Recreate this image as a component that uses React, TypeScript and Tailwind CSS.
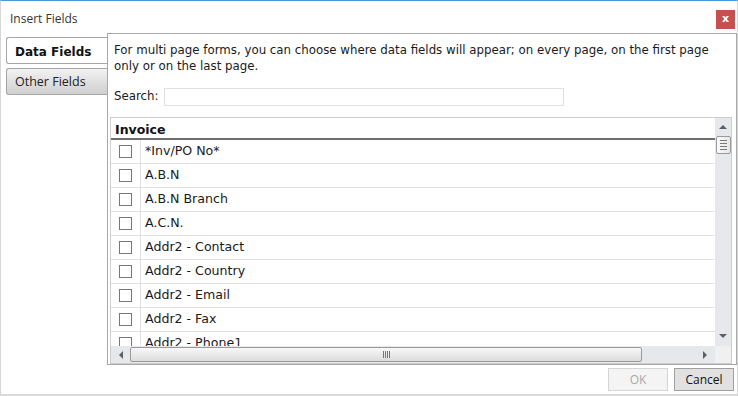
import React from "react";

const rows = [
  "*Inv/PO No*",
  "A.B.N",
  "A.B.N Branch",
  "A.C.N.",
  "Addr2 - Contact",
  "Addr2 - Country",
  "Addr2 - Email",
  "Addr2 - Fax",
  "Addr2 - Phone1",
];

const verdana = "font-['DejaVu_Sans',Verdana,sans-serif]";
const segoe = "font-['Open_Sans','Noto_Sans',sans-serif]";

function Tri({ dir }: { dir: "up" | "down" | "left" | "right" }) {
  const pts = {
    up: "0,4 4,0 8,4",
    down: "0,0 8,0 4,4",
    left: "4,0 4,8 0,4",
    right: "0,0 0,8 4,4",
  }[dir];
  const horiz = dir === "up" || dir === "down";
  return (
    <svg width={horiz ? 8 : 4} height={horiz ? 4 : 8} viewBox={horiz ? "0 0 8 4" : "0 0 4 8"}>
      <polygon points={pts} fill="#606060" />
    </svg>
  );
}

export default function App() {
  return (
    <div className="w-[738px] h-[396px] bg-white border-t border-t-[#4a9ad8] border-x border-x-[#d6d6d6] border-b-2 border-b-[#d9d9d9] flex flex-col overflow-hidden">
      {/* title bar */}
      <div className="h-[32px] flex items-center justify-between pl-[9px] pr-[2px] shrink-0">
        <span className={`${segoe} text-[12px] text-[#333] mt-[4px]`}>Insert Fields</span>
        <div className="w-[19px] h-[19px] mt-[5px] bg-[#c74f4f] flex items-center justify-center text-white text-[11px] font-bold font-['DejaVu_Sans',sans-serif] leading-none pb-[2px]">
          x
        </div>
      </div>

      <div className="flex h-[332px] shrink-0">
        {/* tabs */}
        <div className="w-[106px] shrink-0 pt-[4px] pl-[5px] flex flex-col gap-[4px]">
          <div className={`h-[27px] bg-white border border-r-0 border-[#a6a6a6] rounded-l-[3px] flex items-center pl-[8px] pt-[2px] ${verdana} font-bold text-[12px] text-[#111]`}>
            Data Fields
          </div>
          <div className={`h-[27px] bg-gradient-to-b from-[#f2f2f2] to-[#cfcfcf] border border-r-0 border-[#a6a6a6] rounded-l-[3px] flex items-center pl-[8px] pt-[1px] ${segoe} text-[12.5px] text-[#222]`}>
            Other Fields
          </div>
        </div>

        {/* panel */}
        <div className={`flex-1 border border-[#a8a8a8] ${verdana} text-[11.8px] text-[#1a1a1a] flex flex-col pl-[6px] pr-[4px] pt-[8px]`}>
          <p className="leading-[16px]">
            For multi page forms, you can choose where data fields will appear; on every page, on the first page only or on the last page.
          </p>
          <div className="flex items-center mt-[14px] h-[18px]">
            <span>Search:</span>
            <div className="ml-[5px] w-[400px] h-[18px] border border-[#e0e0e0]" />
          </div>

          <div className="mt-[11px] ml-[-4px] h-[247px] border border-[#cdcdcd] flex flex-col">
            <div className="flex flex-1 min-h-0">
              <div className="flex-1 flex flex-col overflow-hidden">
                <div className="h-[22px] shrink-0 border-b-2 border-[#6e6e6e] flex items-center pl-[4px] pt-[4px] font-bold text-[12.5px] text-[#111]">
                  Invoice
                </div>
                {rows.map((r) => (
                  <div key={r} className="h-[24px] shrink-0 flex border-b border-[#e1e1e1]">
                    <div className="w-[30px] shrink-0 border-r border-[#e1e1e1] flex items-center justify-center">
                      <div className="w-[13px] h-[13px] border border-[#777] bg-white" />
                    </div>
                    <div className="flex items-center pl-[4px] text-[12.6px]">{r}</div>
                  </div>
                ))}
              </div>
              {/* vertical scrollbar */}
              <div className="w-[16px] shrink-0 bg-[#e6e8ec] flex flex-col items-center">
                <div className="h-[18px] flex items-center justify-center">
                  <Tri dir="up" />
                </div>
                <div className="w-[15px] h-[18px] bg-gradient-to-r from-[#fafafa] to-[#e6e6e6] border border-[#9a9a9a] rounded-[2px] flex flex-col items-center justify-center gap-[2px]">
                  <div className="w-[7px] h-px bg-[#777]" />
                  <div className="w-[7px] h-px bg-[#777]" />
                  <div className="w-[7px] h-px bg-[#777]" />
                  <div className="w-[7px] h-px bg-[#777]" />
                </div>
                <div className="flex-1" />
                <div className="h-[20px] flex items-center justify-center">
                  <Tri dir="down" />
                </div>
              </div>
            </div>
            {/* horizontal scrollbar */}
            <div className="h-[17px] shrink-0 flex">
              <div className="flex-1 bg-[#e6e8ec] flex items-center">
                <div className="w-[19px] flex items-center justify-center">
                  <Tri dir="left" />
                </div>
                <div className="w-[512px] h-[15px] bg-gradient-to-b from-[#f8f8f8] to-[#dcdcdc] border border-[#9a9a9a] rounded-[2px] flex items-center justify-center gap-[1px]">
                  <div className="w-px h-[7px] bg-[#777]" />
                  <div className="w-px h-[7px] bg-[#777]" />
                  <div className="w-px h-[7px] bg-[#777]" />
                  <div className="w-px h-[7px] bg-[#777]" />
                </div>
                <div className="flex-1" />
                <div className="w-[20px] flex items-center justify-center">
                  <Tri dir="right" />
                </div>
              </div>
              <div className="w-[16px] bg-[#f0f0f0]" />
            </div>
          </div>
        </div>
      </div>

      {/* footer */}
      <div className="flex-1 flex justify-end items-start pt-[3px] pr-[3px] gap-[6px]">
        <button className={`w-[60px] h-[23px] border border-[#d4d4d4] bg-[#f4f4f4] ${segoe} text-[12px] text-[#a8a8a8] pt-[1px]`}>
          OK
        </button>
        <button className={`w-[60px] h-[23px] border border-[#a0a0a0] bg-[#e1e1e1] ${segoe} text-[12px] text-[#111] pt-[1px]`}>
          Cancel
        </button>
      </div>
    </div>
  );
}
